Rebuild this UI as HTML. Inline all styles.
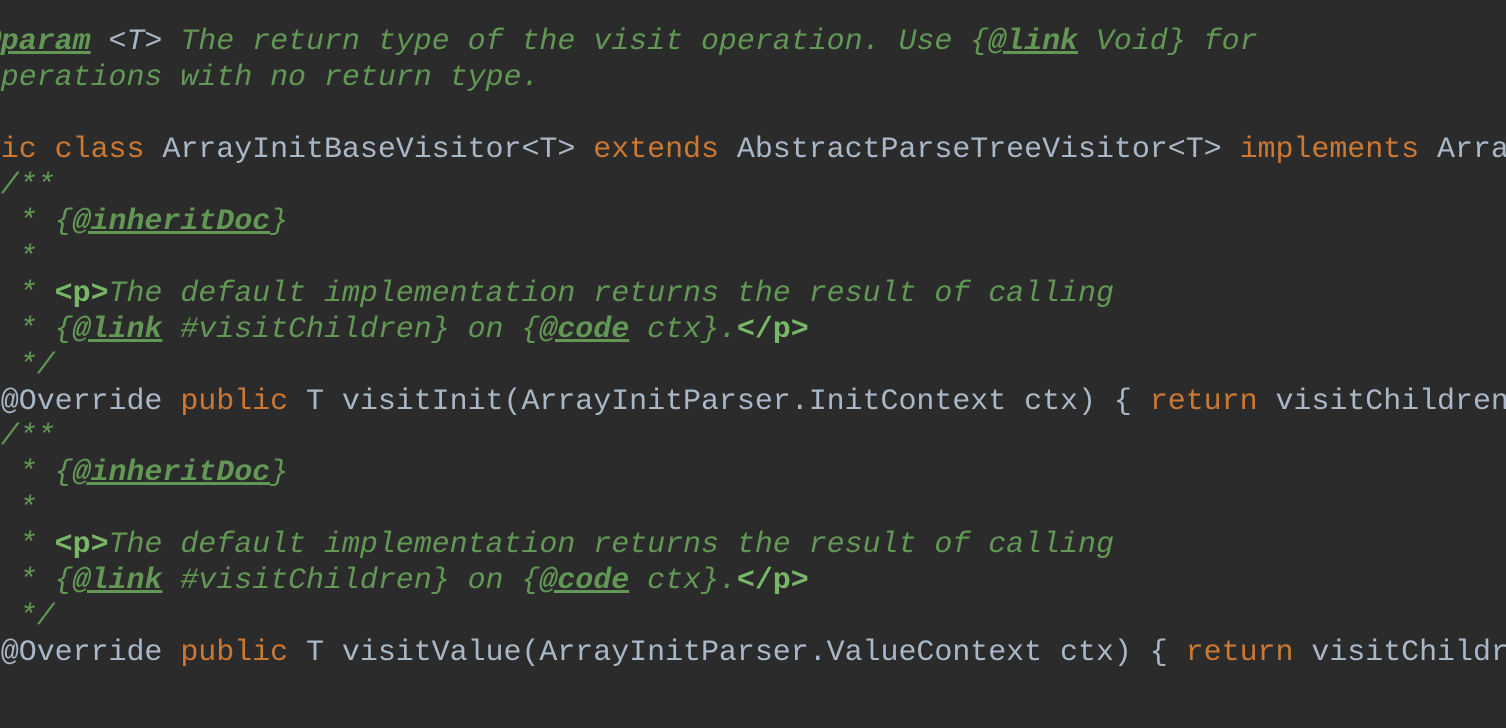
<!DOCTYPE html>
<html><head><meta charset="utf-8"><style>
html,body{margin:0;padding:0;background:#2b2b2b;width:1506px;height:728px;overflow:hidden}
#w{position:absolute;left:0;top:0;width:1506px;height:728px;overflow:hidden}
pre{position:absolute;left:-71px;top:25px;margin:0;font-family:"Liberation Mono",monospace;font-size:30px;line-height:35.95px;color:#a9b7c6;white-space:pre;letter-spacing:-0.05px}
.c{color:#629755;font-style:italic}
.t{color:#629755;font-style:italic;font-weight:bold;text-decoration:underline}
.p{color:#77b767;font-style:normal;font-weight:bold}
.g{color:#a9b7c6;font-style:italic}
.k{color:#cc7832}
</style></head><body><div id="w">
<pre><span class="c"> * <span class="t">@param</span> <span class="g">&lt;T&gt;</span> The return type of the visit operation. Use {<span class="t">@link</span> Void} for
 * operations with no return type.
 */</span>
<span class="k">public class</span> ArrayInitBaseVisitor&lt;T&gt; <span class="k">extends</span> AbstractParseTreeVisitor&lt;T&gt; <span class="k">implements</span> ArrayInitVisitor&lt;T&gt; {
<span class="c">    /**
     * {<span class="t">@inheritDoc</span>}
     *
     * <span class="p">&lt;p&gt;</span>The default implementation returns the result of calling
     * {<span class="t">@link</span> #visitChildren} on {<span class="t">@code</span> ctx}.<span class="p">&lt;/p&gt;</span>
     */</span>
    @Override <span class="k">public</span> T visitInit(ArrayInitParser.InitContext ctx) { <span class="k">return</span> visitChildren(ctx); }
<span class="c">    /**
     * {<span class="t">@inheritDoc</span>}
     *
     * <span class="p">&lt;p&gt;</span>The default implementation returns the result of calling
     * {<span class="t">@link</span> #visitChildren} on {<span class="t">@code</span> ctx}.<span class="p">&lt;/p&gt;</span>
     */</span>
    @Override <span class="k">public</span> T visitValue(ArrayInitParser.ValueContext ctx) { <span class="k">return</span> visitChildren(ctx); }
}</pre>
</div></body></html>
